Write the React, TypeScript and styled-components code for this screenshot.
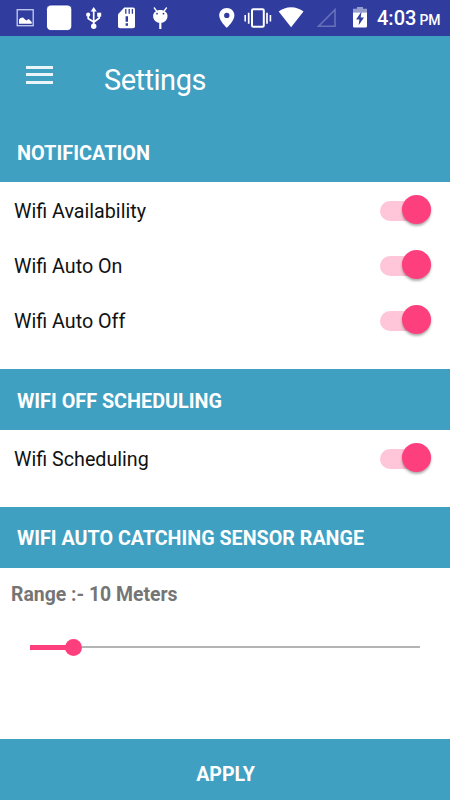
import React, { useState } from "react";
import styled, { createGlobalStyle } from "styled-components";

const teal = "#40a0c1";
const pink = "#fd3f7e";

const GlobalStyle = createGlobalStyle`
  * { box-sizing: border-box; }
  body { margin: 0; background: #fff; font-family: Roboto, sans-serif; }
`;

const Screen = styled.main`
  display: flex;
  flex-direction: column;
  width: 450px;
  height: 800px;
  overflow: hidden;
  background: #fff;
`;

const StatusBar = styled.div`
  display: flex;
  flex: none;
  height: 36px;
  background: #303d9f;
  color: #fff;
`;

const StatusIcon = styled.svg<{ $push?: boolean }>`
  flex: none;
  height: 35px;
  margin-left: ${(p) => (p.$push ? "auto" : "0")};
`;

const Clock = styled.div`
  display: flex;
  align-items: baseline;
  gap: 3px;
  width: 74px;
  padding: 6px 0 0 1px;
  font-size: 20px;
  line-height: 24px;
  font-weight: 500;
  white-space: nowrap;
`;

const Meridiem = styled.span`
  font-size: 14px;
`;

const Toolbar = styled.header`
  display: flex;
  align-items: center;
  flex: none;
  height: 88px;
  padding-left: 26px;
  gap: 51px;
  background: ${teal};
`;

const MenuButton = styled.button`
  display: flex;
  flex-direction: column;
  gap: 4.5px;
  width: 27px;
  margin-top: -11px;
  padding: 0;
  border: 0;
  background: none;
`;

const MenuLine = styled.span`
  height: 3px;
  background: #e9f5f9;
`;

const Title = styled.h1`
  margin: 0;
  color: #fff;
  font-size: 29px;
  line-height: 34px;
  font-weight: 400;
  letter-spacing: -0.5px;
`;

const SectionTitle = styled.h2<{ $height: number; $top: number; $size: number }>`
  flex: none;
  height: ${(p) => p.$height}px;
  margin: 0;
  padding: ${(p) => p.$top}px 17px 0;
  background: ${teal};
  color: #fff;
  font-size: ${(p) => p.$size}px;
  line-height: 24px;
  font-weight: 700;
`;

const Section = styled.section<{ $height: number }>`
  flex: none;
  height: ${(p) => p.$height}px;
`;

const SettingRow = styled.label`
  display: flex;
  align-items: flex-start;
  justify-content: space-between;
  height: 55px;
  padding: 18px 19px 0 14px;
  color: #111;
  font-size: 19.7px;
  line-height: 24px;
`;

const Switch = styled.button<{ $on: boolean }>`
  display: flex;
  align-items: center;
  justify-content: ${(p) => (p.$on ? "flex-end" : "flex-start")};
  width: 51px;
  height: 20px;
  margin-top: 1px;
  padding: 0;
  border: 0;
  border-radius: 10px;
  background: ${(p) => (p.$on ? "#ffc5d8" : "#b5b5b5")};
`;

const Thumb = styled.span`
  width: 29px;
  height: 29px;
  margin-top: -3px;
  border-radius: 50%;
  background: ${pink};
  box-shadow: 0 2px 2.5px rgba(0, 0, 0, 0.32);
`;

const RangeSection = styled.section`
  display: flex;
  flex-direction: column;
  flex: 1;
  padding: 15px 30px 0;
`;

const RangeLabel = styled.p`
  margin: 0 0 0 -19px;
  color: #757575;
  font-size: 19.4px;
  line-height: 24px;
  font-weight: 700;
`;

const Slider = styled.div`
  display: flex;
  align-items: center;
  height: 18px;
  margin-top: 31px;
`;

const SliderFill = styled.span`
  height: 5px;
  background: ${pink};
`;

const SliderThumb = styled.span`
  width: 17px;
  height: 17px;
  margin-left: -8.5px;
  border-radius: 50%;
  background: ${pink};
`;

const SliderRest = styled.span`
  flex: 1;
  height: 2px;
  background: #b4b4b4;
`;

const ApplyButton = styled.button`
  flex: none;
  height: 61px;
  padding: 10px 0 0 1px;
  border: 0;
  background: ${teal};
  color: #fff;
  font: 700 19.6px/24px Roboto, sans-serif;
`;

const StatusIcons = () => (
  <>
    <StatusIcon width="40" viewBox="0 0 40 35" fill="none">
      <rect x="17.2" y="9.7" width="16" height="16" stroke="#c7cdec" strokeWidth="1.3" />
      <path d="M19 23.8v-4.2l1.5-1.6 2.5-.5 3.2 3 2.6-1.5 2.9 3v1.8z" fill="#fff" />
    </StatusIcon>
    <StatusIcon width="40" viewBox="40 0 40 35">
      <rect x="46.5" y="5" width="25.3" height="25.6" rx="4.5" fill="#fff" stroke="#1c2b96" strokeWidth=".8" />
    </StatusIcon>
    <StatusIcon width="30" viewBox="80 0 30 35" fill="none">
      <path d="M93.7 10v17M88.2 14.5v4l5.5 3.5M99.2 15v3l-5.5 4.2" stroke="#fff" strokeWidth="1.7" />
      <path d="M93.7 7l3 4.5h-6z" fill="#fff" />
      <circle cx="93.7" cy="26.3" r="2.7" fill="#fff" />
      <circle cx="88.2" cy="14.7" r="2.1" fill="#fff" />
      <path d="M97.2 12.7h4v4h-4z" fill="#fff" />
    </StatusIcon>
    <StatusIcon width="32" viewBox="110 0 32 35">
      <path d="M124.3 7.5H133q2 0 2 2v16.7q0 2-2 2h-13q-2 0-2-2v-12z" fill="#fff" />
      <path d="M125.8 9v4.8M129.2 9v4.8M132.4 9v4.8" stroke="#303d9f" strokeWidth="1.3" />
      <path d="M125.6 16.3h2.4v5.5h-2.4zm0 7h2.4v2.5h-2.4z" fill="#303d9f" />
    </StatusIcon>
    <StatusIcon width="36" viewBox="142 0 36 35">
      <path d="M154 7.5l2.9 4M166.7 7.5l-2.9 4" stroke="#fff" strokeWidth="1.3" />
      <path d="M153.1 16c0-3.8 3.2-6.1 7.2-6.1s7.2 2.3 7.2 6.1-3.2 7-7.2 7-7.2-3.2-7.2-7z" fill="#fff" />
      <path d="M159.2 22.5h2.2V29h-2.2z" fill="#fff" />
      <circle cx="157" cy="13.7" r=".9" fill="#303d9f" />
      <circle cx="163.5" cy="13.7" r=".9" fill="#303d9f" />
    </StatusIcon>
    <StatusIcon $push width="29" viewBox="211 0 29 35">
      <path fillRule="evenodd" d="M226.8 8c4.3 0 7.6 3.2 7.6 7.4 0 5.2-7.6 12.4-7.6 12.4s-7.6-7.2-7.6-12.4c0-4.2 3.3-7.4 7.6-7.4zm0 4.7a2.7 2.7 0 1 0 0 5.4 2.7 2.7 0 0 0 0-5.4z" fill="#fff" />
    </StatusIcon>
    <StatusIcon width="35" viewBox="240 0 35 35" fill="none" stroke="#fff">
      <rect x="252" y="9.3" width="11.8" height="17.4" rx="1.3" strokeWidth="2" />
      <path d="M248.7 12.7v11M267 12.7v11" strokeWidth="1.7" />
      <path d="M245.2 15v6.5M270.4 15v6.5" strokeWidth="1.6" />
    </StatusIcon>
    <StatusIcon width="37" viewBox="275 0 37 35">
      <path d="M278.7 11.5c3.3-2.7 7.7-4.3 12.4-4.3s9.1 1.6 12.4 4.3l-12.4 15.7z" fill="#fff" />
    </StatusIcon>
    <StatusIcon width="33" viewBox="312 0 33 35" fill="none">
      <path d="M335 9.8v16.4h-16.4z" stroke="#6771b9" strokeWidth="1.6" />
    </StatusIcon>
    <StatusIcon width="31" viewBox="345 0 31 35">
      <path d="M357 7h6v1.8h4v4h-14v-4h4z" fill="#969ecf" />
      <path d="M353 12.5h14v13.7q0 1.3-1.3 1.3h-11.4q-1.3 0-1.3-1.3z" fill="#fff" />
      <path d="M361.5 11.5l-5.4 8h3.3l-.8 5.8 5.4-7.8h-3.3z" fill="#303d9f" />
    </StatusIcon>
  </>
);

function Setting({ label }: { label: string }) {
  const [on, setOn] = useState(true);
  return (
    <SettingRow>
      {label}
      <Switch $on={on} role="switch" aria-checked={on} aria-label={label} onClick={() => setOn(!on)}>
        <Thumb />
      </Switch>
    </SettingRow>
  );
}

export default function App() {
  const range = 10;
  return (
    <>
      <GlobalStyle />
      <Screen>
        <StatusBar>
          <StatusIcons />
          <Clock>
            <span>4:03</span>
            <Meridiem>PM</Meridiem>
          </Clock>
        </StatusBar>
        <Toolbar>
          <MenuButton aria-label="Menu">
            <MenuLine />
            <MenuLine />
            <MenuLine />
          </MenuButton>
          <Title>Settings</Title>
        </Toolbar>
        <SectionTitle $height={58} $top={18} $size={19.9}>NOTIFICATION</SectionTitle>
        <Section $height={187}>
          <Setting label="Wifi Availability" />
          <Setting label="Wifi Auto On" />
          <Setting label="Wifi Auto Off" />
        </Section>
        <SectionTitle $height={61} $top={21} $size={19.8}>WIFI OFF SCHEDULING</SectionTitle>
        <Section $height={77}>
          <Setting label="Wifi Scheduling" />
        </Section>
        <SectionTitle $height={61} $top={20} $size={19.7}>WIFI AUTO CATCHING SENSOR RANGE</SectionTitle>
        <RangeSection>
          <RangeLabel>Range :- {range} Meters</RangeLabel>
          <Slider>
            <SliderFill style={{ width: `${range * 1.11}%` }} />
            <SliderThumb />
            <SliderRest />
          </Slider>
        </RangeSection>
        <ApplyButton>APPLY</ApplyButton>
      </Screen>
    </>
  );
}
